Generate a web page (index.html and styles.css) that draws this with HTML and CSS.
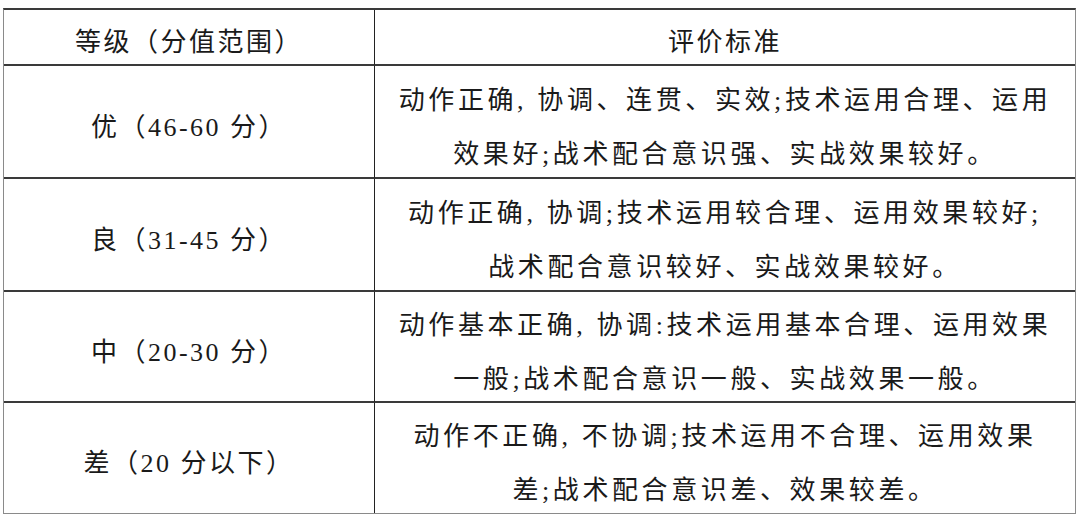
FILE: index.html
```html
<!DOCTYPE html>
<html lang="zh-CN">
<head>
<meta charset="utf-8">
<title>等级评价标准</title>
<link rel="stylesheet" href="styles.css">
</head>
<body>
<div class="page">
  <div class="grade-table">
    <div class="cell head left">等级（分值范围）</div>
    <div class="cell head right">评价标准</div>

    <div class="cell r1 left">优（46-60 分）</div>
    <div class="cell r1 right">动作正确, 协调、连贯、实效;技术运用合理、运用<br>效果好;战术配合意识强、实战效果较好。</div>

    <div class="cell r2 left">良（31-45 分）</div>
    <div class="cell r2 right">动作正确, 协调;技术运用较合理、运用效果较好;<br>战术配合意识较好、实战效果较好。</div>

    <div class="cell r3 left">中（20-30 分）</div>
    <div class="cell r3 right">动作基本正确, 协调:技术运用基本合理、运用效果<br>一般;战术配合意识一般、实战效果一般。</div>

    <div class="cell r4 left">差（20 分以下）</div>
    <div class="cell r4 right">动作不正确, 不协调;技术运用不合理、运用效果<br>差;战术配合意识差、效果较差。</div>
  </div>
</div>
</body>
</html>
```

FILE: styles.css
```css
html, body {
  margin: 0;
  padding: 0;
  background: #ffffff;
}

.page {
  padding: 8px 0 0 3px;
}

.grade-table {
  display: grid;
  grid-template-columns: 371px 700px;
  grid-template-rows: 56px 113px 113px 111px 110px;
  width: 1071px;
  border-top: 2px solid #3a3a3a;
  border-left: 1px solid #8a8a8a;
  border-right: 1px solid #8a8a8a;
  border-bottom: 1px solid #8a8a8a;
  font-family: "Liberation Serif", "Noto Sans CJK SC", serif;
  font-size: 26px;
  letter-spacing: 2.5px;
  line-height: 54px;
  color: #1a1a1a;
}

.cell {
  display: flex;
  align-items: center;
  justify-content: center;
  text-align: center;
  padding-top: 12px;
  box-sizing: border-box;
  border-bottom: 2px solid #3a3a3a;
  white-space: nowrap;
}

.cell.r4 {
  border-bottom: none;
}

.cell.left {
  border-right: 1px solid #222222;
}

.cell.right {
  letter-spacing: 3.6px;
}

.cell.head.right {
  letter-spacing: 2.5px;
}
```
